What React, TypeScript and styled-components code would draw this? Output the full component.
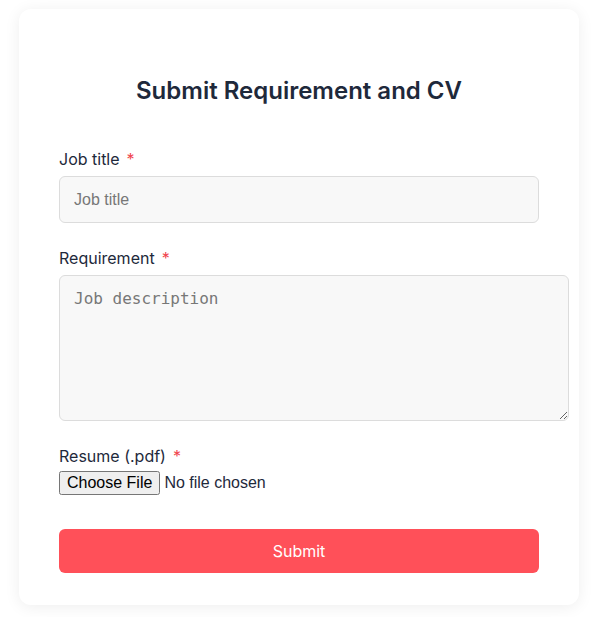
import React from 'react'
import styled, { createGlobalStyle } from 'styled-components'

const GlobalStyle = createGlobalStyle`
  body {
    margin: 0;
    background: #ffffff;
    font-family: Inter, 'Liberation Sans', sans-serif;
  }
`

const Page = styled.div`
  padding: 9px 0 12px 19px;
`

const Card = styled.form`
  width: 560px;
  box-sizing: border-box;
  padding: 64px 40px 32px;
  background: #ffffff;
  border-radius: 12px;
  box-shadow: 0 2px 16px rgba(0, 0, 0, 0.07);
`

const Title = styled.h2`
  margin: 0 0 38px;
  text-align: center;
  font-size: 24px;
  line-height: 36px;
  font-weight: 600;
  color: #1e293b;
`

const Field = styled.div`
  display: flex;
  flex-direction: column;
  align-items: flex-start;
  margin-bottom: 23px;
`

const Label = styled.label`
  display: flex;
  gap: 7px;
  font-size: 16px;
  line-height: 24px;
  color: #1e293b;
  margin-bottom: 5px;
`

const Required = styled.span`
  color: #f0444d;
`

const TextInput = styled.input`
  width: 480px;
  height: 47px;
  box-sizing: border-box;
  padding: 0 14px;
  border: 1px solid #dcdcdc;
  border-radius: 6px;
  background: #f8f8f8;
  font-family: 'Liberation Sans', Arial, sans-serif;
  font-size: 16px;
  color: #222;
  &::placeholder {
    color: #777;
  }
`

const TextArea = styled.textarea`
  width: 480px;
  height: 117px;
  padding: 13px 14px 14px;
  border: 1px solid #dcdcdc;
  border-radius: 6px;
  background: #f8f8f8;
  font-family: 'DejaVu Sans Mono', monospace;
  font-size: 16px;
  line-height: 20px;
  color: #222;
  &::placeholder {
    color: #777;
  }
`

const FileInput = styled.input`
  font-family: 'Liberation Sans', Arial, sans-serif;
  font-size: 16px;
  color: #1e293b;
  margin-top: -2px;
`

const SubmitButton = styled.button`
  width: 480px;
  height: 44px;
  margin-top: 11px;
  border: none;
  border-radius: 6px;
  background: #ff5059;
  color: #ffffff;
  font-family: Inter, 'Liberation Sans', sans-serif;
  font-size: 16px;
  cursor: pointer;
`

export default function App() {
  return (
    <Page>
      <GlobalStyle />
      <Card onSubmit={(e) => e.preventDefault()}>
        <Title>Submit Requirement and CV</Title>
        <Field>
          <Label>
            Job title <Required>*</Required>
          </Label>
          <TextInput placeholder="Job title" />
        </Field>
        <Field>
          <Label>
            Requirement <Required>*</Required>
          </Label>
          <TextArea placeholder="Job description" />
        </Field>
        <Field>
          <Label>
            Resume (.pdf) <Required>*</Required>
          </Label>
          <FileInput type="file" accept=".pdf" />
        </Field>
        <SubmitButton type="submit">Submit</SubmitButton>
      </Card>
    </Page>
  )
}
